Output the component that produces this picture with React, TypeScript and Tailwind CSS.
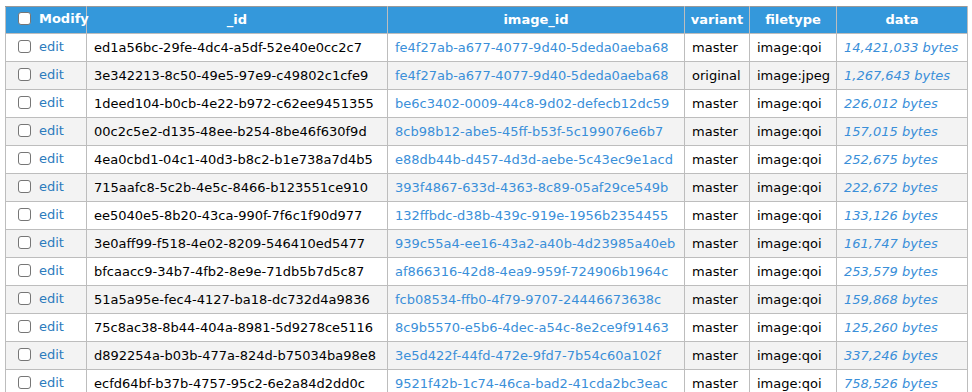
const rows = [
  ["ed1a56bc-29fe-4dc4-a5df-52e40e0cc2c7", "fe4f27ab-a677-4077-9d40-5deda0aeba68", "master", "image:qoi", "14,421,033"],
  ["3e342213-8c50-49e5-97e9-c49802c1cfe9", "fe4f27ab-a677-4077-9d40-5deda0aeba68", "original", "image:jpeg", "1,267,643"],
  ["1deed104-b0cb-4e22-b972-c62ee9451355", "be6c3402-0009-44c8-9d02-defecb12dc59", "master", "image:qoi", "226,012"],
  ["00c2c5e2-d135-48ee-b254-8be46f630f9d", "8cb98b12-abe5-45ff-b53f-5c199076e6b7", "master", "image:qoi", "157,015"],
  ["4ea0cbd1-04c1-40d3-b8c2-b1e738a7d4b5", "e88db44b-d457-4d3d-aebe-5c43ec9e1acd", "master", "image:qoi", "252,675"],
  ["715aafc8-5c2b-4e5c-8466-b123551ce910", "393f4867-633d-4363-8c89-05af29ce549b", "master", "image:qoi", "222,672"],
  ["ee5040e5-8b20-43ca-990f-7f6c1f90d977", "132ffbdc-d38b-439c-919e-1956b2354455", "master", "image:qoi", "133,126"],
  ["3e0aff99-f518-4e02-8209-546410ed5477", "939c55a4-ee16-43a2-a40b-4d23985a40eb", "master", "image:qoi", "161,747"],
  ["bfcaacc9-34b7-4fb2-8e9e-71db5b7d5c87", "af866316-42d8-4ea9-959f-724906b1964c", "master", "image:qoi", "253,579"],
  ["51a5a95e-fec4-4127-ba18-dc732d4a9836", "fcb08534-ffb0-4f79-9707-24446673638c", "master", "image:qoi", "159,868"],
  ["75c8ac38-8b44-404a-8981-5d9278ce5116", "8c9b5570-e5b6-4dec-a54c-8e2ce9f91463", "master", "image:qoi", "125,260"],
  ["d892254a-b03b-477a-824d-b75034ba98e8", "3e5d422f-44fd-472e-9fd7-7b54c60a102f", "master", "image:qoi", "337,246"],
  ["ecfd64bf-b37b-4757-95c2-6e2a84d2dd0c", "9521f42b-1c74-46ca-bad2-41cda2bc3eac", "master", "image:qoi", "758,526"],
];

const Box = () => (
  <span className="inline-block w-[13px] h-[13px] rounded-[3px] border border-[#767676] bg-white align-middle" />
);

export default function App() {
  return (
    <div className="bg-white w-[972px] h-[392px] overflow-hidden pt-[6px] pl-[5px] font-['DejaVu_Sans',Verdana,sans-serif] text-[13px] text-black">
      <table className="table-fixed border-collapse w-[962px]">
        <colgroup>
          <col className="w-[81px]" />
          <col className="w-[301px]" />
          <col className="w-[297px]" />
          <col className="w-[65px]" />
          <col className="w-[87px]" />
          <col className="w-[131px]" />
        </colgroup>
        <thead>
          <tr className="h-[27px] bg-[#3498db] text-white font-bold">
            <th className="border border-[#bdbdbd] border-t-[#999] px-[7px] text-left whitespace-nowrap">
              <span className="inline-flex items-center gap-[8px] pl-[5px]">
                <Box />
                <span>Modify</span>
              </span>
            </th>
            <th className="border border-[#bdbdbd] border-t-[#999]">_id</th>
            <th className="border border-[#bdbdbd] border-t-[#999]">image_id</th>
            <th className="border border-[#bdbdbd] border-t-[#999]">variant</th>
            <th className="border border-[#bdbdbd] border-t-[#999]">filetype</th>
            <th className="border border-[#bdbdbd] border-t-[#999]">data</th>
          </tr>
        </thead>
        <tbody>
          {rows.map((r, i) => (
            <tr key={i} className={"h-[28px] " + (i % 2 ? "bg-[#f3f3f3]" : "bg-white")}>
              <td className="border border-[#bdbdbd] px-[7px] whitespace-nowrap">
                <span className="inline-flex items-center gap-[8px] pl-[5px]">
                  <Box />
                  <span className="text-[#2b7bbd]">edit</span>
                </span>
              </td>
              <td className="border border-[#bdbdbd] px-[7px] whitespace-nowrap">{r[0]}</td>
              <td className="border border-[#bdbdbd] px-[7px] whitespace-nowrap text-[#3a8fd9]">{r[1]}</td>
              <td className="border border-[#bdbdbd] px-[7px] whitespace-nowrap">{r[2]}</td>
              <td className="border border-[#bdbdbd] px-[7px] whitespace-nowrap">{r[3]}</td>
              <td className="border border-[#bdbdbd] px-[7px] whitespace-nowrap italic text-[#3a8fd9]">{r[4]} bytes</td>
            </tr>
          ))}
        </tbody>
      </table>
    </div>
  );
}
